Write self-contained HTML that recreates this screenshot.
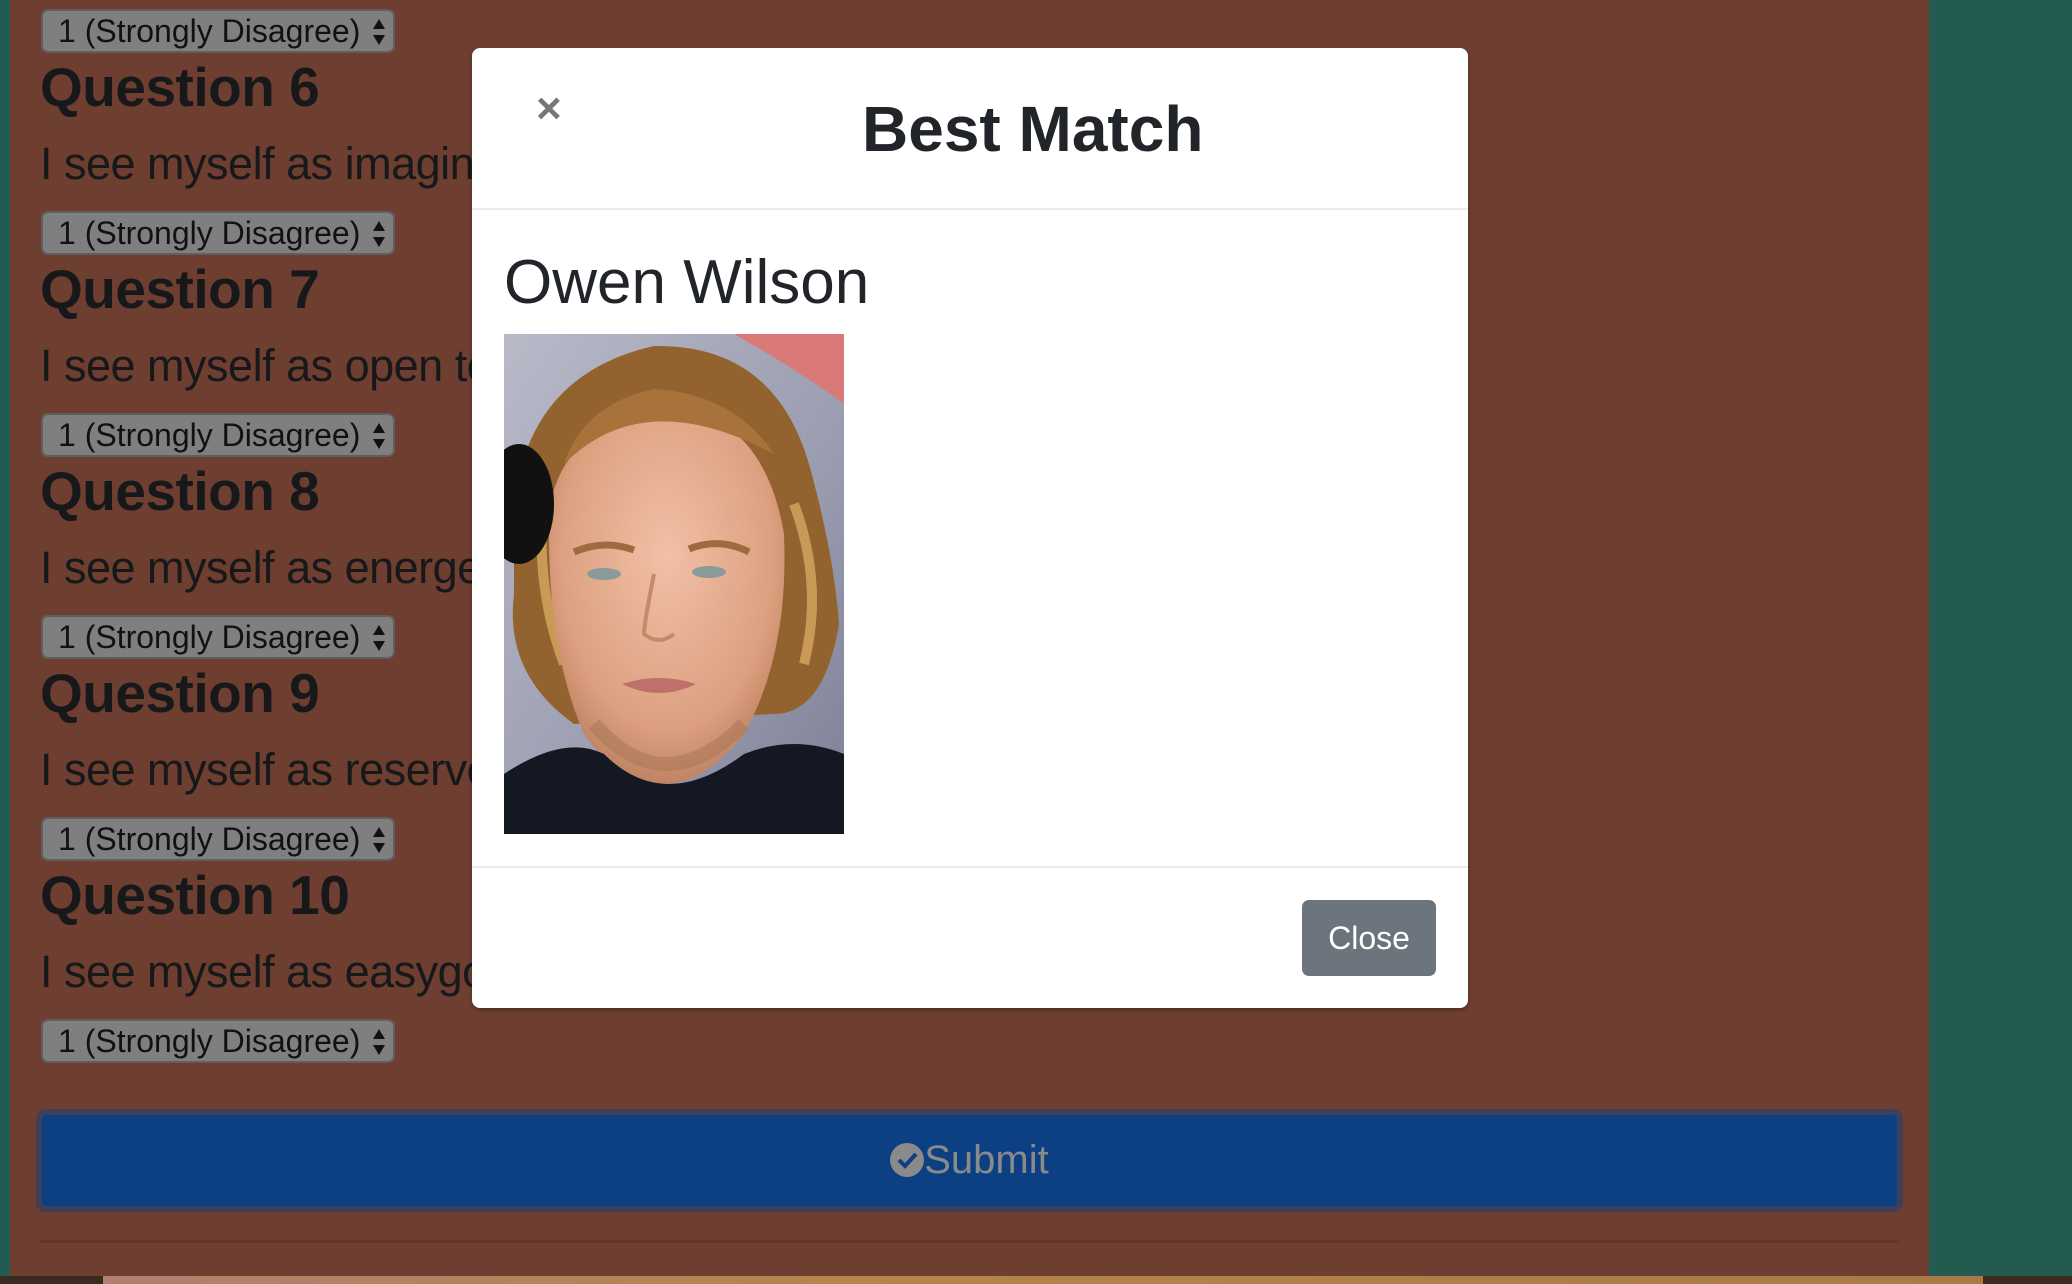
<!DOCTYPE html>
<html><head><meta charset="utf-8">
<style>
*{margin:0;padding:0;box-sizing:border-box}
html,body{width:2072px;height:1284px;overflow:hidden;background:#235b50;font-family:"Liberation Sans",Arial,sans-serif}
.main{position:absolute;left:10px;top:0;width:1919px;height:1276px;background:#6e3e31}
.sel{position:absolute;left:41px;width:354px;height:44px;background:#7f7f7f;border:2px solid #5f5f5f;border-radius:7px;font-size:32px;color:#111;line-height:40px;padding-left:15px;white-space:nowrap}
.sel .ar{position:absolute;right:7px;top:6px;width:14px;height:30px}
.q{position:absolute;left:40px;font-size:55px;font-weight:bold;color:#17181a;white-space:nowrap;letter-spacing:-0.5px}
.t{position:absolute;left:40px;font-size:45px;color:#17181a;white-space:nowrap;letter-spacing:-0.5px}
.submit{position:absolute;left:36px;top:1109px;width:1867px;height:103px;background:#0c4082;border:6px solid #3e3f5a;border-radius:10px;color:#8a8a8a;font-size:40px;text-align:center;line-height:90px}
.hr{position:absolute;left:40px;top:1240px;width:1860px;height:3px;background:#62342a}
.bottom{position:absolute;left:0;top:1276px;width:2072px;height:8px;background:#3a2a20}
.bottom div{position:absolute;left:103px;width:1880px;top:0;height:8px;background:linear-gradient(90deg,#b08070,#b5854b 40%,#a87a45)}
.modal{position:absolute;left:472px;top:48px;width:996px;height:960px;background:#fff;border-radius:8px;box-shadow:0 2px 4px rgba(0,0,0,.3)}
.hd{position:absolute;left:0;top:0;width:100%;height:162px;border-bottom:2px solid #e9ecef}
.x{position:absolute;left:64px;top:36px;font-size:44px;font-weight:bold;color:#777}
.title{position:absolute;left:0;top:44px;width:996px;padding-left:390px;font-size:64px;font-weight:bold;color:#212529}
.name{position:absolute;left:32px;top:199px;font-size:62px;color:#212529}
.pic{position:absolute;left:32px;top:286px;width:340px;height:500px}
.ft{position:absolute;left:0;top:818px;width:100%;height:2px;background:#e9ecef}
.close{position:absolute;left:830px;top:852px;width:134px;height:76px;background:#6c757d;border-radius:7px;color:#fff;font-size:32px;text-align:center;line-height:76px}
</style></head><body>
<div class="main"></div>
<div class="sel" style="top:9px">1 (Strongly Disagree)<svg class="ar" viewBox="0 0 14 30"><path d="M7 2 L13 12 L1 12Z M7 28 L13 18 L1 18Z" fill="#111"/></svg></div>
<div class="q" style="top:55px">Question 6</div>
<div class="t" style="top:138px">I see myself as imaginative</div>
<div class="sel" style="top:211px">1 (Strongly Disagree)<svg class="ar" viewBox="0 0 14 30"><path d="M7 2 L13 12 L1 12Z M7 28 L13 18 L1 18Z" fill="#111"/></svg></div>
<div class="q" style="top:257px">Question 7</div>
<div class="t" style="top:340px">I see myself as open to</div>
<div class="sel" style="top:413px">1 (Strongly Disagree)<svg class="ar" viewBox="0 0 14 30"><path d="M7 2 L13 12 L1 12Z M7 28 L13 18 L1 18Z" fill="#111"/></svg></div>
<div class="q" style="top:459px">Question 8</div>
<div class="t" style="top:542px">I see myself as energetic</div>
<div class="sel" style="top:615px">1 (Strongly Disagree)<svg class="ar" viewBox="0 0 14 30"><path d="M7 2 L13 12 L1 12Z M7 28 L13 18 L1 18Z" fill="#111"/></svg></div>
<div class="q" style="top:661px">Question 9</div>
<div class="t" style="top:744px">I see myself as reserved</div>
<div class="sel" style="top:817px">1 (Strongly Disagree)<svg class="ar" viewBox="0 0 14 30"><path d="M7 2 L13 12 L1 12Z M7 28 L13 18 L1 18Z" fill="#111"/></svg></div>
<div class="q" style="top:863px">Question 10</div>
<div class="t" style="top:946px">I see myself as easygoing</div>
<div class="sel" style="top:1019px">1 (Strongly Disagree)<svg class="ar" viewBox="0 0 14 30"><path d="M7 2 L13 12 L1 12Z M7 28 L13 18 L1 18Z" fill="#111"/></svg></div>
<div class="submit"><svg width="34" height="34" viewBox="0 0 34 34" style="vertical-align:-4px"><circle cx="17" cy="17" r="17" fill="#8a8a8a"/><path d="M9 17 L15 23 L26 11" stroke="#0c4082" stroke-width="4" fill="none"/></svg>Submit</div>
<div class="hr"></div>
<div class="bottom"><div></div></div>
<div class="modal">
 <div class="hd"><div class="x">×</div><div class="title">Best Match</div></div>
 <div class="name">Owen Wilson</div>
 <svg class="pic" viewBox="0 0 340 500">
  <defs><linearGradient id="bg" x1="0" y1="0" x2="1" y2="1"><stop offset="0" stop-color="#b8bac8"/><stop offset="0.6" stop-color="#9a9cb0"/><stop offset="1" stop-color="#7d7f95"/></linearGradient>
  <radialGradient id="sk" cx="0.5" cy="0.4" r="0.65"><stop offset="0" stop-color="#f2c0a6"/><stop offset="0.7" stop-color="#dca080"/><stop offset="1" stop-color="#b57a5a"/></radialGradient></defs>
  <rect width="340" height="500" fill="url(#bg)"/>
  <path d="M230 0 L340 0 L340 70 Q300 40 230 0Z" fill="#d97a78"/>
  <path d="M10 170 Q25 40 150 12 Q270 10 305 130 Q330 220 335 290 Q320 380 270 380 L70 390 Q0 340 10 260Z" fill="#93632f"/>
  <path d="M40 160 Q30 250 60 330 M290 170 Q320 250 300 330" stroke="#c99a55" stroke-width="10" fill="none"/>
  <path d="M45 200 Q40 100 160 70 Q260 80 280 200 Q285 320 240 400 Q200 450 160 450 Q110 445 80 400 Q45 320 45 200Z" fill="url(#sk)"/>
  <path d="M60 130 Q140 50 270 120 Q230 60 150 55 Q80 70 60 130Z" fill="#a8733a"/>
  <ellipse cx="15" cy="170" rx="35" ry="60" fill="#111"/>
  <path d="M70 218 Q100 205 130 216" stroke="#a06a40" stroke-width="7" fill="none"/>
  <path d="M185 215 Q215 203 245 218" stroke="#a06a40" stroke-width="7" fill="none"/>
  <ellipse cx="100" cy="240" rx="17" ry="6" fill="#8a9a9a"/><ellipse cx="205" cy="238" rx="17" ry="6" fill="#8a9a9a"/>
  <path d="M150 240 Q140 290 140 300 Q155 312 170 300" stroke="#c48a6a" stroke-width="4" fill="none"/>
  <path d="M118 350 Q155 338 192 350 Q155 368 118 350Z" fill="#c0706a"/>
  <path d="M90 390 Q160 470 240 390" stroke="#a5734f" stroke-width="14" fill="none" opacity=".5"/>
  <path d="M0 440 Q60 400 100 420 Q160 480 240 420 Q290 400 340 420 L340 500 L0 500Z" fill="#141822"/>
 </svg>
 <div class="ft"></div>
 <div class="close">Close</div>
</div>
</body></html>
